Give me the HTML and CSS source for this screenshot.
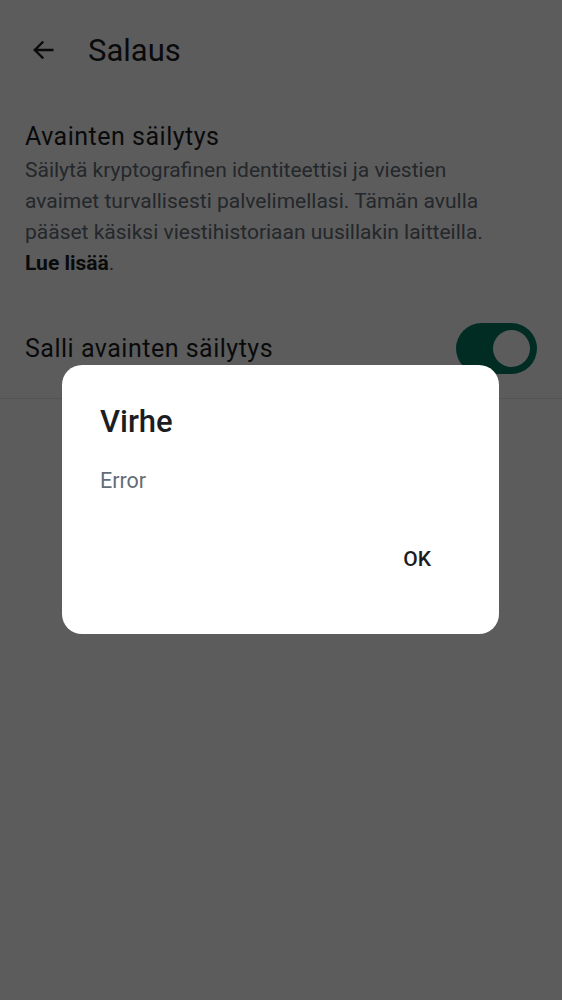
FILE: index.html
```html
<!DOCTYPE html>
<html lang="fi">
<head>
<meta charset="utf-8">
<title>Salaus</title>
<link rel="stylesheet" href="styles.css">
</head>
<body>
<div class="screen">
  <header class="toolbar">
    <button class="back" aria-label="Takaisin">
      <svg width="28" height="28" viewBox="0 0 24 24"><path d="M20 12H5M11.5 5.5L5 12l6.5 6.5" fill="none" stroke="#1b1d22" stroke-width="2" stroke-linecap="square"/></svg>
    </button>
    <h1 class="title">Salaus</h1>
  </header>
  <section class="section">
    <h2 class="section-title">Avainten säilytys</h2>
    <p class="section-desc">Säilytä kryptografinen identiteettisi ja viestien avaimet turvallisesti palvelimellasi. Tämän avulla pääset käsiksi viestihistoriaan uusillakin laitteilla. <b>Lue lisää</b>.</p>
  </section>
  <div class="row">
    <span class="row-label">Salli avainten säilytys</span>
    <span class="switch"><span class="thumb"></span></span>
  </div>
  <div class="divider"></div>
</div>
<div class="scrim">
  <div class="dialog">
    <h3 class="dialog-title">Virhe</h3>
    <p class="dialog-msg">Error</p>
    <div class="dialog-actions"><button class="dialog-btn">OK</button></div>
  </div>
</div>
</body>
</html>
```
FILE: styles.css
```css
* { box-sizing: border-box; }
html, body { margin: 0; padding: 0; }
body {
  width: 562px;
  height: 1000px;
  background: #ffffff;
  font-family: Roboto, "Noto Sans", sans-serif;
  color: #1b1d22;
  overflow: hidden;
  position: relative;
}
.toolbar {
  height: 100px;
  display: flex;
  align-items: center;
  padding-left: 29px;
}
.back {
  border: 0;
  background: none;
  padding: 0;
  width: 28px;
  height: 28px;
  display: flex;
}
.title {
  margin: 0 0 0 31px;
  font-size: 31px;
  font-weight: 400;
  line-height: 1;
}
.section {
  padding: 21px 40px 0 25px;
}
.section-title {
  margin: 0;
  font-size: 25px;
  font-weight: 400;
  letter-spacing: 0.5px;
  line-height: 32px;
  color: #1b1d22;
}
.section-desc {
  margin: 2px 0 0 0;
  font-size: 21px;
  line-height: 31px;
  color: #656d77;
}
.section-desc b { color: #1b1d22; font-weight: 700; }
.row {
  display: flex;
  align-items: center;
  justify-content: space-between;
  padding: 0 25px;
  margin-top: 44px;
  height: 51px;
}
.row-label {
  font-size: 25px;
  letter-spacing: 0.5px;
  color: #1b1d22;
}
.switch {
  width: 81px;
  height: 51px;
  border-radius: 26px;
  background: #007a61;
  display: flex;
  align-items: center;
  justify-content: flex-end;
  padding-right: 7px;
}
.thumb {
  width: 37px;
  height: 37px;
  border-radius: 50%;
  background: #ffffff;
}
.divider {
  margin-top: 24px;
  height: 1px;
  background: #e1e6ec;
}
.scrim {
  position: absolute;
  inset: 0;
  background: rgba(0, 0, 0, 0.64);
}
.dialog {
  position: absolute;
  left: 62px;
  top: 365px;
  width: 437px;
  height: 269px;
  background: #ffffff;
  border-radius: 20px;
  padding: 39px 38px 0 38px;
}
.dialog-title {
  margin: 0;
  font-size: 31px;
  font-weight: 500;
  line-height: 36px;
  color: #1b1d22;
}
.dialog-msg {
  margin: 27px 0 0 0;
  font-size: 21.5px;
  line-height: 28px;
  color: #656d77;
}
.dialog-actions {
  display: flex;
  justify-content: flex-end;
  margin-top: 52px;
}
.dialog-btn {
  border: 0;
  background: none;
  font-family: Roboto, "Noto Sans", sans-serif;
  font-size: 21px;
  font-weight: 500;
  color: #1b1d22;
  padding: 0 30px 0 0;
}
```
